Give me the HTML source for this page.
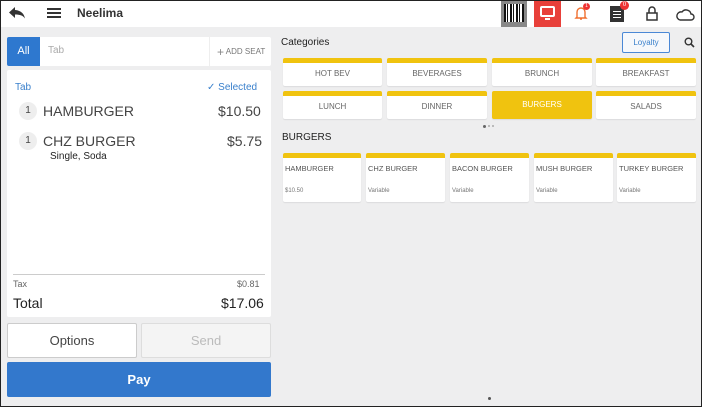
<!DOCTYPE html><html><head><style>
*{box-sizing:border-box;margin:0;padding:0}
body{width:702px;height:407px;overflow:hidden;font-family:"Liberation Sans",sans-serif;background:#eeeeef;position:relative;color:#333}
.frame{position:absolute;inset:0;border:1px solid #222;pointer-events:none;z-index:9}
.a{position:absolute}
.top{left:0;top:0;width:702px;height:27px;background:#fff}
.cat{position:absolute;background:#fff;border-top:5px solid #f0c30f;border-radius:2px;font-size:8px;color:#666;text-align:center;box-shadow:0 1px 1px rgba(0,0,0,.08)}
.item{position:absolute;background:#fff;border-top:5px solid #f0c30f;border-radius:2px;font-size:7.5px;color:#555;box-shadow:0 1px 1px rgba(0,0,0,.08);top:153px;height:49px}
.item b{font-weight:normal;position:absolute;left:2px;top:6px}
.item i{font-style:normal;position:absolute;left:2px;top:30px;font-size:6px;color:#777}
.qty{position:absolute;width:18px;height:18px;border-radius:50%;background:#eee;font-size:10px;text-align:center;line-height:18px;color:#444}
</style></head><body>
<div class="frame"></div>
<div class="a top"></div>
<svg class="a" style="left:8px;top:6px" width="18" height="14" viewBox="0 0 18 14"><path d="M7 1L1 6.5 7 12V8.5c5 0 8 1 10 4-1-5-4-8-10-8.5z" fill="#333"/></svg>
<div class="a" style="left:47px;top:8px;width:14px;height:2px;background:#333;box-shadow:0 4px 0 #333,0 8px 0 #333"></div>
<div class="a" style="left:77px;top:6px;font-size:12px;font-weight:bold;color:#333">Neelima</div>
<div class="a" style="left:501px;top:1px;width:26px;height:26px;background:#888;padding:3px"><div style="width:20px;height:18px;background:repeating-linear-gradient(90deg,#111 0 2px,#fff 2px 3px,#111 3px 4px,#fff 4px 6px)"></div></div>
<div class="a" style="left:534px;top:1px;width:27px;height:26px;background:#e8403a"></div>
<div class="a" style="left:540px;top:6px;width:15px;height:11px;border:2px solid #fff;border-radius:2px"></div>
<div class="a" style="left:545px;top:18px;width:5px;height:2px;background:#fff"></div>
<svg class="a" style="left:574px;top:5px" width="14" height="16" viewBox="0 0 14 16"><path d="M3 12V7a4 4 0 0 1 8 0v5l1 1H2z M6 14h2" fill="none" stroke="#f07030" stroke-width="1.4"/></svg>
<div class="a" style="left:583px;top:3px;width:7px;height:7px;border-radius:50%;background:#e33;color:#fff;font-size:5px;text-align:center;line-height:7px">1</div>
<div class="a" style="left:610px;top:6px;width:14px;height:16px;background:#333"></div>
<div class="a" style="left:613px;top:11px;width:8px;height:1px;background:#fff;box-shadow:0 3px 0 #fff,0 6px 0 #fff"></div>
<div class="a" style="left:620px;top:1px;width:9px;height:9px;border-radius:50%;background:#e33;color:#fff;font-size:6px;text-align:center;line-height:9px">0</div>
<svg class="a" style="left:645px;top:5px" width="14" height="17" viewBox="0 0 14 17"><path d="M4 8V5a3 3 0 0 1 6 0v3M2 8h10v7H2z" fill="none" stroke="#333" stroke-width="1.5"/></svg>
<svg class="a" style="left:675px;top:7px" width="20" height="14" viewBox="0 0 20 14"><path d="M5 13h11a3 3 0 0 0 0-6 5 5 0 0 0-9-2 4 4 0 0 0-2 8z" fill="none" stroke="#333" stroke-width="1.4"/></svg>

<div class="a" style="left:7px;top:37px;width:264px;height:29px;background:#fff;border-radius:2px"></div>
<div class="a" style="left:7px;top:37px;width:33px;height:29px;background:#2e78cf;color:#fff;font-size:11px;text-align:center;line-height:29px;border-radius:2px 0 0 2px">All</div>
<div class="a" style="left:48px;top:45px;font-size:10px;color:#aaa">Tab</div>
<div class="a" style="left:209px;top:37px;width:1px;height:29px;background:#eee"></div>
<div class="a" style="left:217px;top:45px;font-size:8px;color:#777"><span style="font-size:12px;vertical-align:-2px;color:#888">+</span> ADD SEAT</div>

<div class="a" style="left:7px;top:70px;width:264px;height:247px;background:#fff;border-radius:2px"></div>
<div class="a" style="left:15px;top:82px;font-size:10px;color:#3a80cc">Tab</div>
<div class="a" style="left:207px;top:82px;font-size:10px;color:#3a80cc">✓ Selected</div>
<div class="qty" style="left:19px;top:102px">1</div>
<div class="a" style="left:43px;top:103px;font-size:14px;color:#444">HAMBURGER</div>
<div class="a" style="left:218px;top:103px;font-size:14px;color:#444">$10.50</div>
<div class="qty" style="left:19px;top:132px">1</div>
<div class="a" style="left:43px;top:133px;font-size:14px;color:#444">CHZ BURGER</div>
<div class="a" style="left:227px;top:133px;font-size:14px;color:#444">$5.75</div>
<div class="a" style="left:50px;top:151px;font-size:10px;color:#222">Single, Soda</div>
<div class="a" style="left:13px;top:274px;width:252px;height:1px;background:#ccc"></div>
<div class="a" style="left:13px;top:279px;font-size:9px;color:#666">Tax</div>
<div class="a" style="left:237px;top:279px;font-size:9px;color:#666">$0.81</div>
<div class="a" style="left:13px;top:295px;font-size:14px;color:#222">Total</div>
<div class="a" style="left:221px;top:295px;font-size:14px;color:#222">$17.06</div>

<div class="a" style="left:7px;top:323px;width:130px;height:35px;background:#fff;border:1px solid #ccc;border-radius:2px;text-align:center;line-height:33px;font-size:13px;color:#444">Options</div>
<div class="a" style="left:141px;top:323px;width:130px;height:35px;background:#f4f4f4;border:1px solid #ddd;border-radius:2px;text-align:center;line-height:33px;font-size:13px;color:#bbb">Send</div>
<div class="a" style="left:7px;top:362px;width:264px;height:35px;background:#3378cc;border-radius:2px;text-align:center;line-height:35px;font-size:13px;color:#fff;font-weight:bold">Pay</div>

<div class="a" style="left:281px;top:37px;font-size:10px;color:#222">Categories</div>
<div class="a" style="left:622px;top:32px;width:48px;height:21px;border:1px solid #4a88d6;border-radius:2px;background:#f6f8fb;font-size:8px;color:#3a80cc;text-align:center;line-height:19px">Loyalty</div>
<svg class="a" style="left:684px;top:37px" width="11" height="11" viewBox="0 0 11 11"><circle cx="4.5" cy="4.5" r="3.3" fill="none" stroke="#333" stroke-width="1.4"/><path d="M7 7l3 3" stroke="#333" stroke-width="1.6"/></svg>

<div class="cat" style="left:283px;top:58px;width:99px;height:28px;line-height:22px">HOT BEV</div>
<div class="cat" style="left:387px;top:58px;width:100px;height:28px;line-height:22px">BEVERAGES</div>
<div class="cat" style="left:492px;top:58px;width:100px;height:28px;line-height:22px">BRUNCH</div>
<div class="cat" style="left:596px;top:58px;width:100px;height:28px;line-height:22px">BREAKFAST</div>
<div class="cat" style="left:283px;top:91px;width:99px;height:28px;line-height:22px">LUNCH</div>
<div class="cat" style="left:387px;top:91px;width:100px;height:28px;line-height:22px">DINNER</div>
<div class="cat" style="left:492px;top:91px;width:100px;height:28px;line-height:18px;background:#f0c30f;color:#fff">BURGERS</div>
<div class="cat" style="left:596px;top:91px;width:100px;height:28px;line-height:22px">SALADS</div>
<div class="a" style="left:483px;top:125px;width:3px;height:3px;border-radius:50%;background:#666"></div>
<div class="a" style="left:488px;top:125px;width:2px;height:2px;border-radius:50%;background:#aaa;box-shadow:4px 0 0 #aaa"></div>

<div class="a" style="left:282px;top:132px;font-size:10px;color:#222">BURGERS</div>
<div class="item" style="left:283px;width:78px"><b>HAMBURGER</b><i>$10.50</i></div>
<div class="item" style="left:366px;width:79px"><b>CHZ BURGER</b><i>Variable</i></div>
<div class="item" style="left:450px;width:79px"><b>BACON BURGER</b><i>Variable</i></div>
<div class="item" style="left:534px;width:79px"><b>MUSH BURGER</b><i>Variable</i></div>
<div class="item" style="left:617px;width:79px"><b>TURKEY BURGER</b><i>Variable</i></div>
<div class="a" style="left:488px;top:397px;width:3px;height:3px;border-radius:50%;background:#555"></div>
</body></html>
